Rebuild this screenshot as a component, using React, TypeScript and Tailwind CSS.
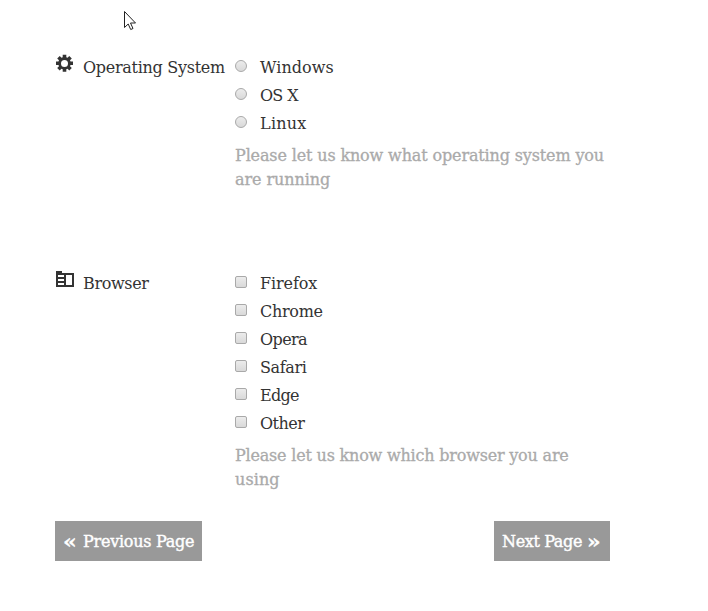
import type { ReactNode } from 'react';

type Item = { name: string; spacing: string };

const systems: Item[] = [
  { name: 'Windows', spacing: 'tracking-[0.05px]' },
  { name: 'OS X', spacing: 'tracking-[-0.95px] [word-spacing:1px]' },
  { name: 'Linux', spacing: 'tracking-[0.25px]' },
];
const browsers: Item[] = [
  { name: 'Firefox', spacing: 'tracking-[-0.1px]' },
  { name: 'Chrome', spacing: 'tracking-[-0.3px]' },
  { name: 'Opera', spacing: 'tracking-[-0.6px]' },
  { name: 'Safari', spacing: 'tracking-[-0.35px]' },
  { name: 'Edge', spacing: 'tracking-[-0.7px]' },
  { name: 'Other', spacing: 'tracking-[-0.5px]' },
];

function Options({ items, type }: { items: Item[]; type: 'radio' | 'checkbox' }) {
  return (
    <>
      {items.map((item) => (
        <label key={item.name} className="flex h-7 items-center">
          <input
            type={type}
            name={type}
            className={
              'mr-[13px] mb-[5px] size-3 shrink-0 appearance-none border border-[#a9a9a9] bg-linear-to-b from-[#ececec] to-[#d9d9d9] ' +
              (type === 'radio' ? 'rounded-full' : 'rounded-[2px]')
            }
          />
          <span className={item.spacing}>{item.name}</span>
        </label>
      ))}
    </>
  );
}

function Field({ icon, label, children }: { icon: ReactNode; label: ReactNode; children: ReactNode }) {
  return (
    <div className="flex">
      <div className="w-7">{icon}</div>
      <div className="w-[152px] leading-7 whitespace-nowrap">{label}</div>
      <div className="w-[375px]">{children}</div>
    </div>
  );
}

function Gear() {
  return (
    <svg width="19" height="19" viewBox="0 0 19 19" fill="#333">
      <path
        fillRule="evenodd"
        d="M7.700 .8h3.600v2.500l1.200.5 1.800-1.800 2.500 2.500-1.800 1.800.5 1.200h2.500v3.600h-2.500l-.5 1.200 1.800 1.800-2.500 2.500-1.800-1.800-1.200.5v2.500H7.700v-2.500l-1.200-.5-1.800 1.800-2.500-2.500 1.800-1.800-.5-1.200H1V7.500h2.500L4 6.300 2.200 4.500 4.700 2l1.800 1.800 1.200-.5zM9.500 5.900a3.500 3.500 0 1 0 0 7 3.500 3.500 0 0 0 0-7z"
      />
    </svg>
  );
}

function Folder() {
  return (
    <svg width="19" height="19" viewBox="0 0 19 19" fill="#333" shapeRendering="crispEdges">
      <path fillRule="evenodd" d="M1 1h6v2h12v14H1zM3 5v2h6V5zm0 4v2h6V9zm0 4v2h6v-2zm8-8v10h6V5z" />
    </svg>
  );
}

export default function App() {
  return (
    <main className="relative h-[611px] w-[708px] bg-white pt-[54px] pl-[55px] font-['DejaVu_Serif',serif] text-[16px] text-[#333]">
      <svg className="absolute top-[10px] left-[123px]" width="14" height="22" viewBox="0 0 14 22">
        <path d="M1.500 1.500v16l3.700-3.500 2.500 5.500 2.300-1-2.500-5.500h5z" fill="#fff" stroke="#222" />
      </svg>
      <div className="h-[216px]">
        <Field icon={<Gear />} label={<span className="tracking-[-0.29px]">Operating System</span>}>
          <Options items={systems} type="radio" />
          <p className="mt-[6px] leading-6 whitespace-nowrap text-[#aaa] [-webkit-text-stroke:0.3px_#aaa]">
            <span className="tracking-[-0.14px]">Please let us know what operating system you</span>
            <br />
            <span className="tracking-[-0.08px]">are running</span>
          </p>
        </Field>
      </div>
      <div className="h-[251px]">
        <Field icon={<Folder />} label={<span className="tracking-[-0.36px]">Browser</span>}>
          <Options items={browsers} type="checkbox" />
          <p className="mt-[6px] leading-6 whitespace-nowrap text-[#aaa] [-webkit-text-stroke:0.3px_#aaa]">
            <span className="tracking-[-0.2px]">Please let us know which browser you are</span>
            <br />
            <span className="tracking-[0.1px]">using</span>
          </p>
        </Field>
      </div>
      <div className="flex w-[555px] justify-between text-white [-webkit-text-stroke:0.4px_#fff]">
        <button className="flex h-10 w-[147px] items-center bg-[#999] pt-[2px] pl-2 whitespace-nowrap">
          <span className="w-5 origin-left scale-x-115 pb-[2px] text-left text-[19px] leading-4 font-bold">«</span>
          <span className="tracking-[-0.25px]">Previous Page</span>
        </button>
        <button className="flex h-10 w-[116px] items-center bg-[#999] pt-[2px] pl-2 whitespace-nowrap">
          <span className="w-[85px] text-left tracking-[-0.37px]">Next Page</span>
          <span className="origin-left scale-x-115 pb-[2px] text-[19px] leading-4 font-bold">»</span>
        </button>
      </div>
    </main>
  );
}
